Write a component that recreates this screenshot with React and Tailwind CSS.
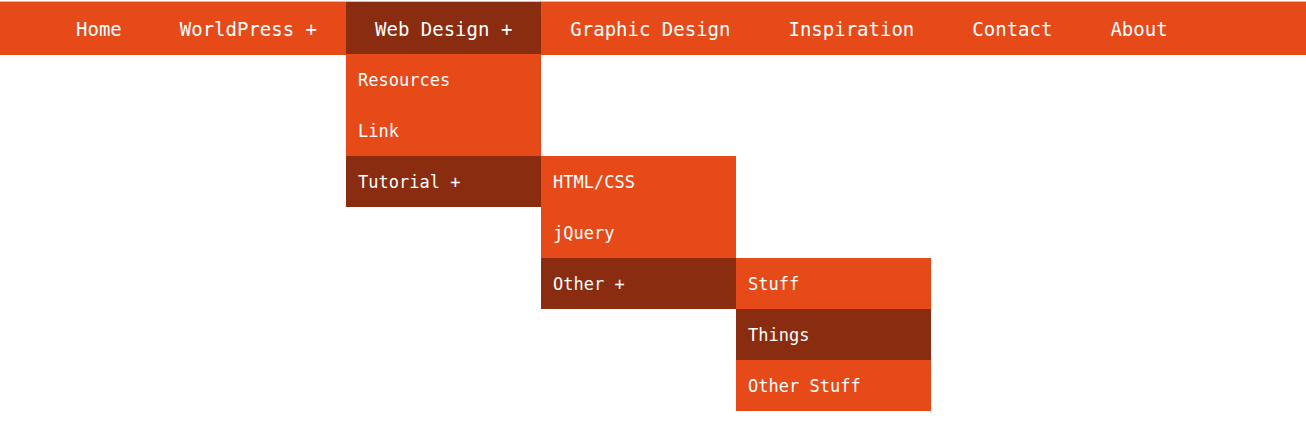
import { useState } from "react";

const MENU = [
  { label: "Home" },
  { label: "WorldPress", items: [] },
  {
    label: "Web Design",
    items: [
      { label: "Resources" },
      { label: "Link" },
      {
        label: "Tutorial",
        items: [
          { label: "HTML/CSS" },
          { label: "jQuery" },
          {
            label: "Other",
            items: [{ label: "Stuff" }, { label: "Things" }, { label: "Other Stuff" }],
          },
        ],
      },
    ],
  },
  { label: "Graphic Design" },
  { label: "Inspiration" },
  { label: "Contact" },
  { label: "About" },
];

function MenuItem({ item, depth, path, onSelect }) {
  const active = path[depth] === item.label;
  const top = depth === 0;
  const size = top
    ? "h-[52px] px-[29px] pt-0.5 text-[19px]"
    : "h-[51px] px-3 pt-0.5 text-[17px]";
  const tone = active ? "bg-[#8a2c0f]" : "bg-[#e64a19]";

  return (
    <li className="relative">
      <a
        href="#"
        aria-expanded={item.items ? active : undefined}
        onClick={(event) => {
          event.preventDefault();
          onSelect(depth, item.label);
        }}
        className={`flex items-center whitespace-nowrap text-white hover:bg-[#8a2c0f] ${size} ${tone}`}
      >
        {item.items ? `${item.label} +` : item.label}
      </a>
      {active && item.items?.length > 0 && (
        <ul className={`absolute z-10 w-[195px] ${top ? "left-0 top-full" : "left-full top-0"}`}>
          {item.items.map((child) => (
            <MenuItem
              key={child.label}
              item={child}
              depth={depth + 1}
              path={path}
              onSelect={onSelect}
            />
          ))}
        </ul>
      )}
    </li>
  );
}

export default function App() {
  const [path, setPath] = useState(["Web Design", "Tutorial", "Other", "Things"]);
  const select = (depth, label) => setPath((current) => [...current.slice(0, depth), label]);

  return (
    <div className="min-h-screen bg-white pt-px font-['DejaVu_Sans_Mono',monospace]">
      <nav aria-label="Main" className="border-t border-[#c4c4bc] bg-[#e64a19] pb-px pl-[47px]">
        <ul className="flex">
          {MENU.map((item) => (
            <MenuItem key={item.label} item={item} depth={0} path={path} onSelect={select} />
          ))}
        </ul>
      </nav>
    </div>
  );
}
